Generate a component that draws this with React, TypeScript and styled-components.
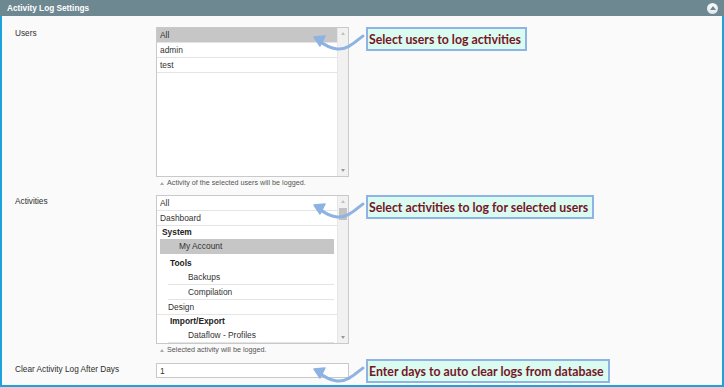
import React from 'react';
import styled, { createGlobalStyle } from 'styled-components';

const Global = createGlobalStyle`
  html, body { margin: 0; padding: 0; background: #fafafa; }
  body { font-family: "Liberation Sans", Arial, sans-serif; }
`;

const Frame = styled.div`
  width: 724px;
  height: 387px;
  display: flex;
  flex-direction: column;
  background: #fafafa;
  overflow: hidden;
`;

const Header = styled.div`
  height: 16px;
  flex: none;
  background: #6e8891;
  display: flex;
  align-items: center;
  justify-content: space-between;
  padding: 0 6px 0 7px;
  color: #fff;
  font-weight: bold;
  font-size: 8.25px;
`;

const Collapse = styled.span`
  width: 11px;
  height: 11px;
  border-radius: 50%;
  background: radial-gradient(circle at 50% 35%, #ffffff 0%, #e6ecee 60%, #c9d3d6 100%);
  display: flex;
  align-items: center;
  justify-content: center;
  &::after {
    content: '';
    border-left: 3px solid transparent;
    border-right: 3px solid transparent;
    border-bottom: 4px solid #6e8891;
    margin-top: -1px;
  }
`;

const Panel = styled.div`
  flex: 1;
  border: 2px solid #1ca3dc;
  border-top: none;
  padding: 11px 0 0 13px;
  display: flex;
  flex-direction: column;
  gap: 6px;
`;

const Row = styled.div<{ $mt?: number }>`
  display: grid;
  grid-template-columns: 141px 193px auto;
  margin-top: ${p => p.$mt ?? 0}px;
`;

const Label = styled.div`
  padding-top: 1px;
  line-height: 12px;
  font-size: 8.25px;
  color: #2e2e2e;
`;

const Field = styled.div`
  display: flex;
  flex-direction: column;
`;

const SelectBox = styled.div<{ $h: number }>`
  height: ${p => p.$h}px;
  box-sizing: border-box;
  border: 1px solid #c9c9c9;
  background: #fff;
  display: flex;
`;

const List = styled.div`
  flex: 1;
  overflow: hidden;
`;

const Opt = styled.div<{
  $pl: number;
  $ml?: number;
  $mr?: number;
  $bold?: boolean;
  $sel?: boolean;
  $sep?: boolean;
  $h?: number;
  $mb?: number;
}>`
  height: ${p => p.$h ?? 14}px;
  line-height: ${p => p.$h ?? 14}px;
  padding-left: ${p => p.$pl}px;
  margin-left: ${p => p.$ml ?? 0}px;
  margin-right: ${p => p.$mr ?? 0}px;
  margin-bottom: ${p => p.$mb ?? 0}px;
  font-size: 8.4px;
  font-weight: ${p => (p.$bold ? 'bold' : 'normal')};
  color: ${p => (p.$bold ? '#222' : '#333')};
  background: ${p => (p.$sel ? '#c6c6c6' : 'transparent')};
  border-bottom: ${p => (p.$sep ? '1px solid #e4e4e4' : 'none')};
  white-space: nowrap;
`;

const Scroll = styled.div`
  width: 10px;
  flex: none;
  background: #f1f1f1;
  border-left: 1px solid #e6e6e6;
  display: flex;
  flex-direction: column;
`;

const ScrollBtn = styled.div<{ $down?: boolean }>`
  height: 11px;
  flex: none;
  display: flex;
  align-items: center;
  justify-content: center;
  &::after {
    content: '';
    border-left: 2.5px solid transparent;
    border-right: 2.5px solid transparent;
    ${p => (p.$down ? 'border-top: 3px solid #9a9a9a;' : 'border-bottom: 3px solid #c0c0c0;')}
  }
`;

const Track = styled.div`
  flex: 1;
  padding: 1px 1px 0 1px;
`;

const Thumb = styled.div`
  height: 12px;
  background: #c2c2c2;
`;

const Note = styled.div`
  height: 12px;
  line-height: 12px;
  font-size: 7.2px;
  color: #555;
  padding-left: 4px;
  display: flex;
  align-items: center;
  gap: 3px;
  &::before {
    content: '';
    border-left: 2px solid transparent;
    border-right: 2px solid transparent;
    border-bottom: 3px solid #a8a8a8;
  }
`;

const TextInput = styled.input`
  width: 193px;
  height: 15px;
  box-sizing: border-box;
  border: 1px solid #c9c9c9;
  background: #fff;
  padding: 0 3px;
  margin: 0;
  font-family: "Liberation Sans", Arial, sans-serif;
  font-size: 8.4px;
  color: #333;
  outline: none;
`;

const CalloutCell = styled.div<{ $mt?: number }>`
  position: relative;
  align-self: start;
  margin-left: 17px;
  margin-top: ${p => p.$mt ?? 0}px;
`;

const Callout = styled.div`
  display: inline-flex;
  align-items: center;
  height: 24px;
  box-sizing: border-box;
  border: 2px solid #8eb4e3;
  background: #dafbef;
  padding: 0 4px 0 1px;
  color: #761528;
  font-family: Lato, "Open Sans", sans-serif;
  font-weight: bold;
  font-size: 12.3px;
  white-space: nowrap;
`;

const ArrowSvg = styled.svg`
  position: absolute;
  left: -56px;
  top: 0;
  overflow: visible;
`;

const Arrow: React.FC = () => (
  <ArrowSvg width="56" height="30" viewBox="0 0 56 30">
    <path
      d="M53 9 C46 14 38 23 27 22 C19 21 13 17 8 13"
      fill="none"
      stroke="#8db3e2"
      strokeWidth="3"
      strokeLinecap="round"
    />
    <path
      d="M15 9 L4 10 L10 19 Z"
      fill="#8db3e2"
      stroke="#8db3e2"
      strokeWidth="1.5"
      strokeLinejoin="round"
    />
  </ArrowSvg>
);

const ScrollBar: React.FC<{ thumb?: boolean }> = ({ thumb }) => (
  <Scroll>
    <ScrollBtn />
    <Track>{thumb && <Thumb />}</Track>
    <ScrollBtn $down />
  </Scroll>
);

export default function App() {
  return (
    <>
      <Global />
      <Frame>
        <Header>
          <span>Activity Log Settings</span>
          <Collapse />
        </Header>
        <Panel>
          <Row>
            <Label>Users</Label>
            <Field>
              <SelectBox $h={150}>
                <List>
                  <Opt $pl={3} $sel $sep>All</Opt>
                  <Opt $pl={3} $sep>admin</Opt>
                  <Opt $pl={3} $sep>test</Opt>
                </List>
                <ScrollBar />
              </SelectBox>
              <Note>Activity of the selected users will be logged.</Note>
            </Field>
            <CalloutCell>
              <Arrow />
              <Callout>Select users to log activities</Callout>
            </CalloutCell>
          </Row>
          <Row>
            <Label>Activities</Label>
            <Field>
              <SelectBox $h={149}>
                <List>
                  <Opt $pl={3} $sep>All</Opt>
                  <Opt $pl={3} $sep>Dashboard</Opt>
                  <Opt $pl={5} $bold $h={13}>System</Opt>
                  <Opt $pl={19} $ml={3} $mr={3} $sel $h={15} $mb={3}>My Account</Opt>
                  <Opt $pl={13} $bold $h={13}>Tools</Opt>
                  <Opt $pl={20} $ml={11} $mr={3} $sep>Backups</Opt>
                  <Opt $pl={20} $ml={11} $mr={3} $sep>Compilation</Opt>
                  <Opt $pl={11} $sep>Design</Opt>
                  <Opt $pl={13} $bold $h={13}>Import/Export</Opt>
                  <Opt $pl={20} $ml={11} $mr={3} $sep>Dataflow - Profiles</Opt>
                </List>
                <ScrollBar thumb />
              </SelectBox>
              <Note>Selected activity will be logged.</Note>
            </Field>
            <CalloutCell>
              <Arrow />
              <Callout>Select activities to log for selected users</Callout>
            </CalloutCell>
          </Row>
          <Row $mt={1}>
            <Label>Clear Activity Log After Days</Label>
            <Field>
              <TextInput value="1" readOnly />
            </Field>
            <CalloutCell $mt={-4}>
              <Arrow />
              <Callout>Enter days to auto clear logs from database</Callout>
            </CalloutCell>
          </Row>
        </Panel>
      </Frame>
    </>
  );
}
